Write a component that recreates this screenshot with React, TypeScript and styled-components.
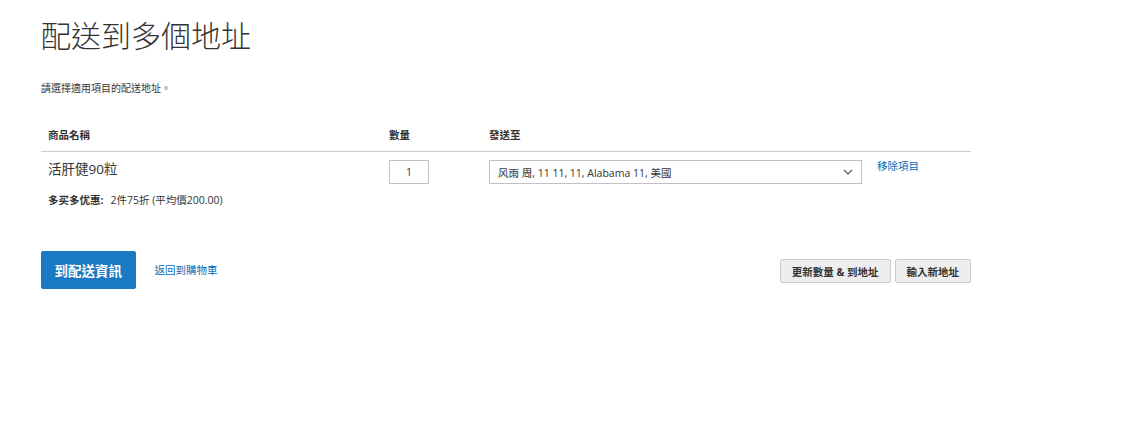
import React from "react";
import styled, { createGlobalStyle } from "styled-components";

const Global = createGlobalStyle`
  html, body { margin: 0; padding: 0; background: #fff; }
  body {
    font-family: "Open Sans", "Noto Sans CJK TC", sans-serif;
    color: #333;
    font-size: 10.5px;
  }
  * { box-sizing: border-box; }
`;

const Page = styled.div`
  width: 1134px;
  height: 428px;
  padding: 18px 0 0 41px;
`;

const Content = styled.div`
  width: 930px;
`;

const Title = styled.h1`
  margin: 0;
  font-family: "Open Sans", "Noto Sans CJK TC Light", "Noto Sans CJK TC", sans-serif;
  font-size: 30px;
  line-height: 36px;
  font-weight: 200;
  color: #333;
`;

const Intro = styled.p`
  margin: 27px 0 0;
  font-size: 10px;
  line-height: 14px;
`;

const Table = styled.div`
  margin-top: 25px;
  display: grid;
  grid-template-columns: 341px 100px 388px 1fr;
`;

const HeadCell = styled.div`
  height: 32px;
  padding: 7px 7px 0;
  font-size: 10.5px;
  line-height: 16px;
  font-weight: 700;
  border-bottom: 1px solid #ccc;
`;

const Cell = styled.div`
  padding: 8px 7px 0;
`;

const ItemName = styled.div`
  font-size: 13.5px;
  line-height: 18px;
`;

const Promo = styled.div`
  margin-top: 15px;
  font-size: 10.5px;
  line-height: 14px;
  white-space: nowrap;
`;

const PromoLabel = styled.strong`
  font-weight: 700;
  margin-right: 7px;
`;

const QtyBox = styled.div`
  width: 40px;
  height: 24px;
  border: 1px solid #c2c2c2;
  display: flex;
  align-items: center;
  justify-content: center;
  font-size: 10.5px;
`;

const SelectBox = styled.div`
  width: 373px;
  height: 24px;
  border: 1px solid #c2c2c2;
  display: flex;
  align-items: center;
  justify-content: space-between;
  padding: 0 8px 0 8px;
  font-size: 10.5px;
`;

const LinkText = styled.a`
  color: #006bb4;
  text-decoration: none;
  font-size: 10.5px;
  line-height: 14px;
  cursor: pointer;
`;

const RemoveCell = styled(Cell)`
  padding-top: 7px;
`;

const Actions = styled.div`
  margin-top: 44px;
  display: flex;
  align-items: center;
`;

const PrimaryButton = styled.button`
  height: 38px;
  padding: 0 12.5px;
  background: #1979c3;
  border: 1px solid #1979c3;
  border-radius: 2px;
  color: #fff;
  font-family: inherit;
  font-size: 13.5px;
  font-weight: 700;
`;

const BackLink = styled(LinkText)`
  margin-left: 19px;
`;

const Secondary = styled.div`
  margin-left: auto;
  display: flex;
  gap: 4px;
  margin-top: 2px;
`;

const SecondaryButton = styled.button`
  height: 24px;
  padding: 0 11px;
  background: #eee;
  border: 1px solid #ccc;
  border-radius: 2px;
  color: #333;
  font-family: inherit;
  font-size: 10.5px;
  font-weight: 700;
`;

const Chevron = () => (
  <svg width="10" height="6" viewBox="0 0 10 6">
    <polyline points="1,1 5,5 9,1" fill="none" stroke="#555" strokeWidth="1.2" />
  </svg>
);

export default function App() {
  return (
    <>
      <Global />
      <Page>
        <Content>
          <Title>配送到多個地址</Title>
          <Intro>請選擇適用項目的配送地址。</Intro>
          <Table>
            <HeadCell>商品名稱</HeadCell>
            <HeadCell>數量</HeadCell>
            <HeadCell>發送至</HeadCell>
            <HeadCell />
            <Cell>
              <ItemName>活肝健90粒</ItemName>
              <Promo>
                <PromoLabel>多买多优惠:</PromoLabel>2件75折 (平均價200.00)
              </Promo>
            </Cell>
            <Cell>
              <QtyBox>1</QtyBox>
            </Cell>
            <Cell>
              <SelectBox>
                <span>风雨 周, 11 11, 11, Alabama 11, 美國</span>
                <Chevron />
              </SelectBox>
            </Cell>
            <RemoveCell>
              <LinkText>移除項目</LinkText>
            </RemoveCell>
          </Table>
          <Actions>
            <PrimaryButton>到配送資訊</PrimaryButton>
            <BackLink>返回到購物車</BackLink>
            <Secondary>
              <SecondaryButton>更新數量 &amp; 到地址</SecondaryButton>
              <SecondaryButton>輸入新地址</SecondaryButton>
            </Secondary>
          </Actions>
        </Content>
      </Page>
    </>
  );
}
